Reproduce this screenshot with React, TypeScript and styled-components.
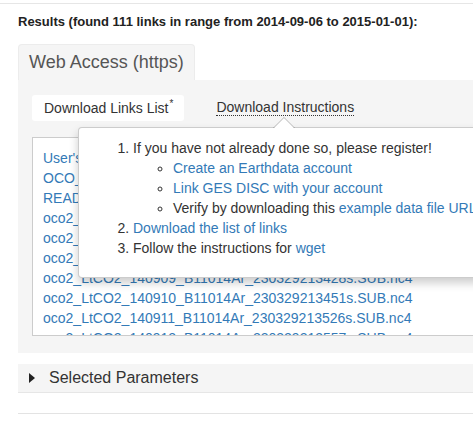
import React from "react";
import styled, { createGlobalStyle } from "styled-components";

const GlobalStyle = createGlobalStyle`
  body {
    margin: 0;
    background: #fff;
    font-family: "Liberation Sans", Arial, sans-serif;
    color: #333;
    overflow: hidden;
  }
`;

const Page = styled.div`
  width: 620px;
  border-top: 1px solid #e6e6e6;
  margin-top: 3px;
  padding-left: 18px;
`;

const Heading = styled.h4`
  margin: 9px 0 0;
  font-size: 13px;
  line-height: 18px;
  font-weight: bold;
  color: #222;
`;

const TabBar = styled.div`
  display: flex;
  margin-top: 13px;
`;

const Tab = styled.div`
  height: 36px;
  padding: 0 10px;
  display: flex;
  align-items: center;
  font-size: 18px;
  color: #555;
  white-space: nowrap;
  background: #f5f5f5;
  border: 1px solid #ececec;
  border-bottom: none;
  border-radius: 4px 4px 0 0;
  box-sizing: border-box;
`;

const Panel = styled.div`
  position: relative;
  background: #f5f5f5;
  padding: 15px 14px 17px;
`;

const PillRow = styled.div`
  display: flex;
  align-items: center;
  gap: 32px;
`;

const Pill = styled.div<{ $active?: boolean }>`
  height: 26px;
  display: flex;
  align-items: center;
  font-size: 14px;
  color: #333;
  white-space: nowrap;
  padding: 0 ${(p) => (p.$active ? "11px 0 12px" : "0")};
  background: ${(p) => (p.$active ? "#fff" : "transparent")};
  border-radius: 3px;
  sup {
    font-size: 10px;
    align-self: flex-start;
    margin-top: 4px;
    margin-left: 1px;
    line-height: 10px;
  }
`;

const Abbr = styled.span`
  border-bottom: 1px dotted #333;
  line-height: 15px;
`;

const LinkBox = styled.div`
  margin-top: 16px;
  height: 199px;
  box-sizing: border-box;
  border: 1px solid #ccc;
  background: #fff;
  padding: 10px 10px 0;
  overflow: hidden;
`;

const FileLink = styled.a`
  display: block;
  font-size: 14px;
  line-height: 20px;
  color: #337ab7;
  text-decoration: none;
  white-space: nowrap;
`;

const Popover = styled.div`
  position: absolute;
  left: 60px;
  top: 47px;
  width: 430px;
  background: #fff;
  border: 1px solid rgba(0, 0, 0, 0.2);
  border-radius: 4px;
  box-shadow: 0 5px 10px rgba(0, 0, 0, 0.2);
  padding: 10px 14px 19px;
  box-sizing: border-box;
  font-size: 14px;
  line-height: 20px;
  color: #333;

  &::before,
  &::after {
    content: "";
    position: absolute;
    left: 194px;
    border: 11px solid transparent;
    border-top: 0;
  }
  &::before {
    top: -11px;
    border-bottom-color: rgba(0, 0, 0, 0.25);
  }
  &::after {
    top: -10px;
    border-bottom-color: #fff;
  }

  ol {
    margin: 0;
    padding-left: 40px;
  }
  ul {
    margin: 0;
    padding-left: 40px;
    list-style: circle;
  }
  a {
    color: #337ab7;
    text-decoration: none;
  }
`;

const Summary = styled.div`
  margin-top: 11px;
  height: 29px;
  background: #f5f5f5;
  border-bottom: 1px solid #e6e6e6;
  display: flex;
  align-items: center;
  padding-left: 10px;
  font-size: 16px;
  color: #333;
  box-sizing: border-box;
`;

const Caret = styled.span`
  width: 0;
  height: 0;
  border-top: 5px solid transparent;
  border-bottom: 5px solid transparent;
  border-left: 6px solid #222;
  margin-right: 14px;
  margin-left: 1px;
`;

const Rule = styled.div`
  margin-top: 20px;
  border-top: 1px solid #e3e3e3;
`;

const files = [
  "User's Guide",
  "OCO_L2_Lite_FP README Document",
  "README Document",
  "oco2_LtCO2_140906_B11014Ar_230329213014s.SUB.nc4",
  "oco2_LtCO2_140907_B11014Ar_230329213137s.SUB.nc4",
  "oco2_LtCO2_140908_B11014Ar_230329213255s.SUB.nc4",
  "oco2_LtCO2_140909_B11014Ar_230329213428s.SUB.nc4",
  "oco2_LtCO2_140910_B11014Ar_230329213451s.SUB.nc4",
  "oco2_LtCO2_140911_B11014Ar_230329213526s.SUB.nc4",
  "oco2_LtCO2_140912_B11014Ar_230329213557s.SUB.nc4",
];

export default function App() {
  return (
    <>
      <GlobalStyle />
      <Page>
        <Heading>Results (found 111 links in range from 2014-09-06 to 2015-01-01):</Heading>
        <TabBar>
          <Tab>Web Access (https)</Tab>
        </TabBar>
        <Panel>
          <PillRow>
            <Pill $active>
              Download Links List<sup>*</sup>
            </Pill>
            <Pill>
              <Abbr>Download Instructions</Abbr>
            </Pill>
          </PillRow>
          <LinkBox>
            {files.map((f, i) => (
              <FileLink key={i} href="#">
                {f}
              </FileLink>
            ))}
          </LinkBox>
          <Popover>
            <ol>
              <li>
                If you have not already done so, please register!
                <ul>
                  <li>
                    <a href="#">Create an Earthdata account</a>
                  </li>
                  <li>
                    <a href="#">Link GES DISC with your account</a>
                  </li>
                  <li>
                    Verify by downloading this <a href="#">example data file URL</a>
                  </li>
                </ul>
              </li>
              <li>
                <a href="#">Download the list of links</a>
              </li>
              <li>
                Follow the instructions for <a href="#">wget</a>
              </li>
            </ol>
          </Popover>
        </Panel>
        <Summary>
          <Caret />
          Selected Parameters
        </Summary>
        <Rule />
      </Page>
    </>
  );
}
